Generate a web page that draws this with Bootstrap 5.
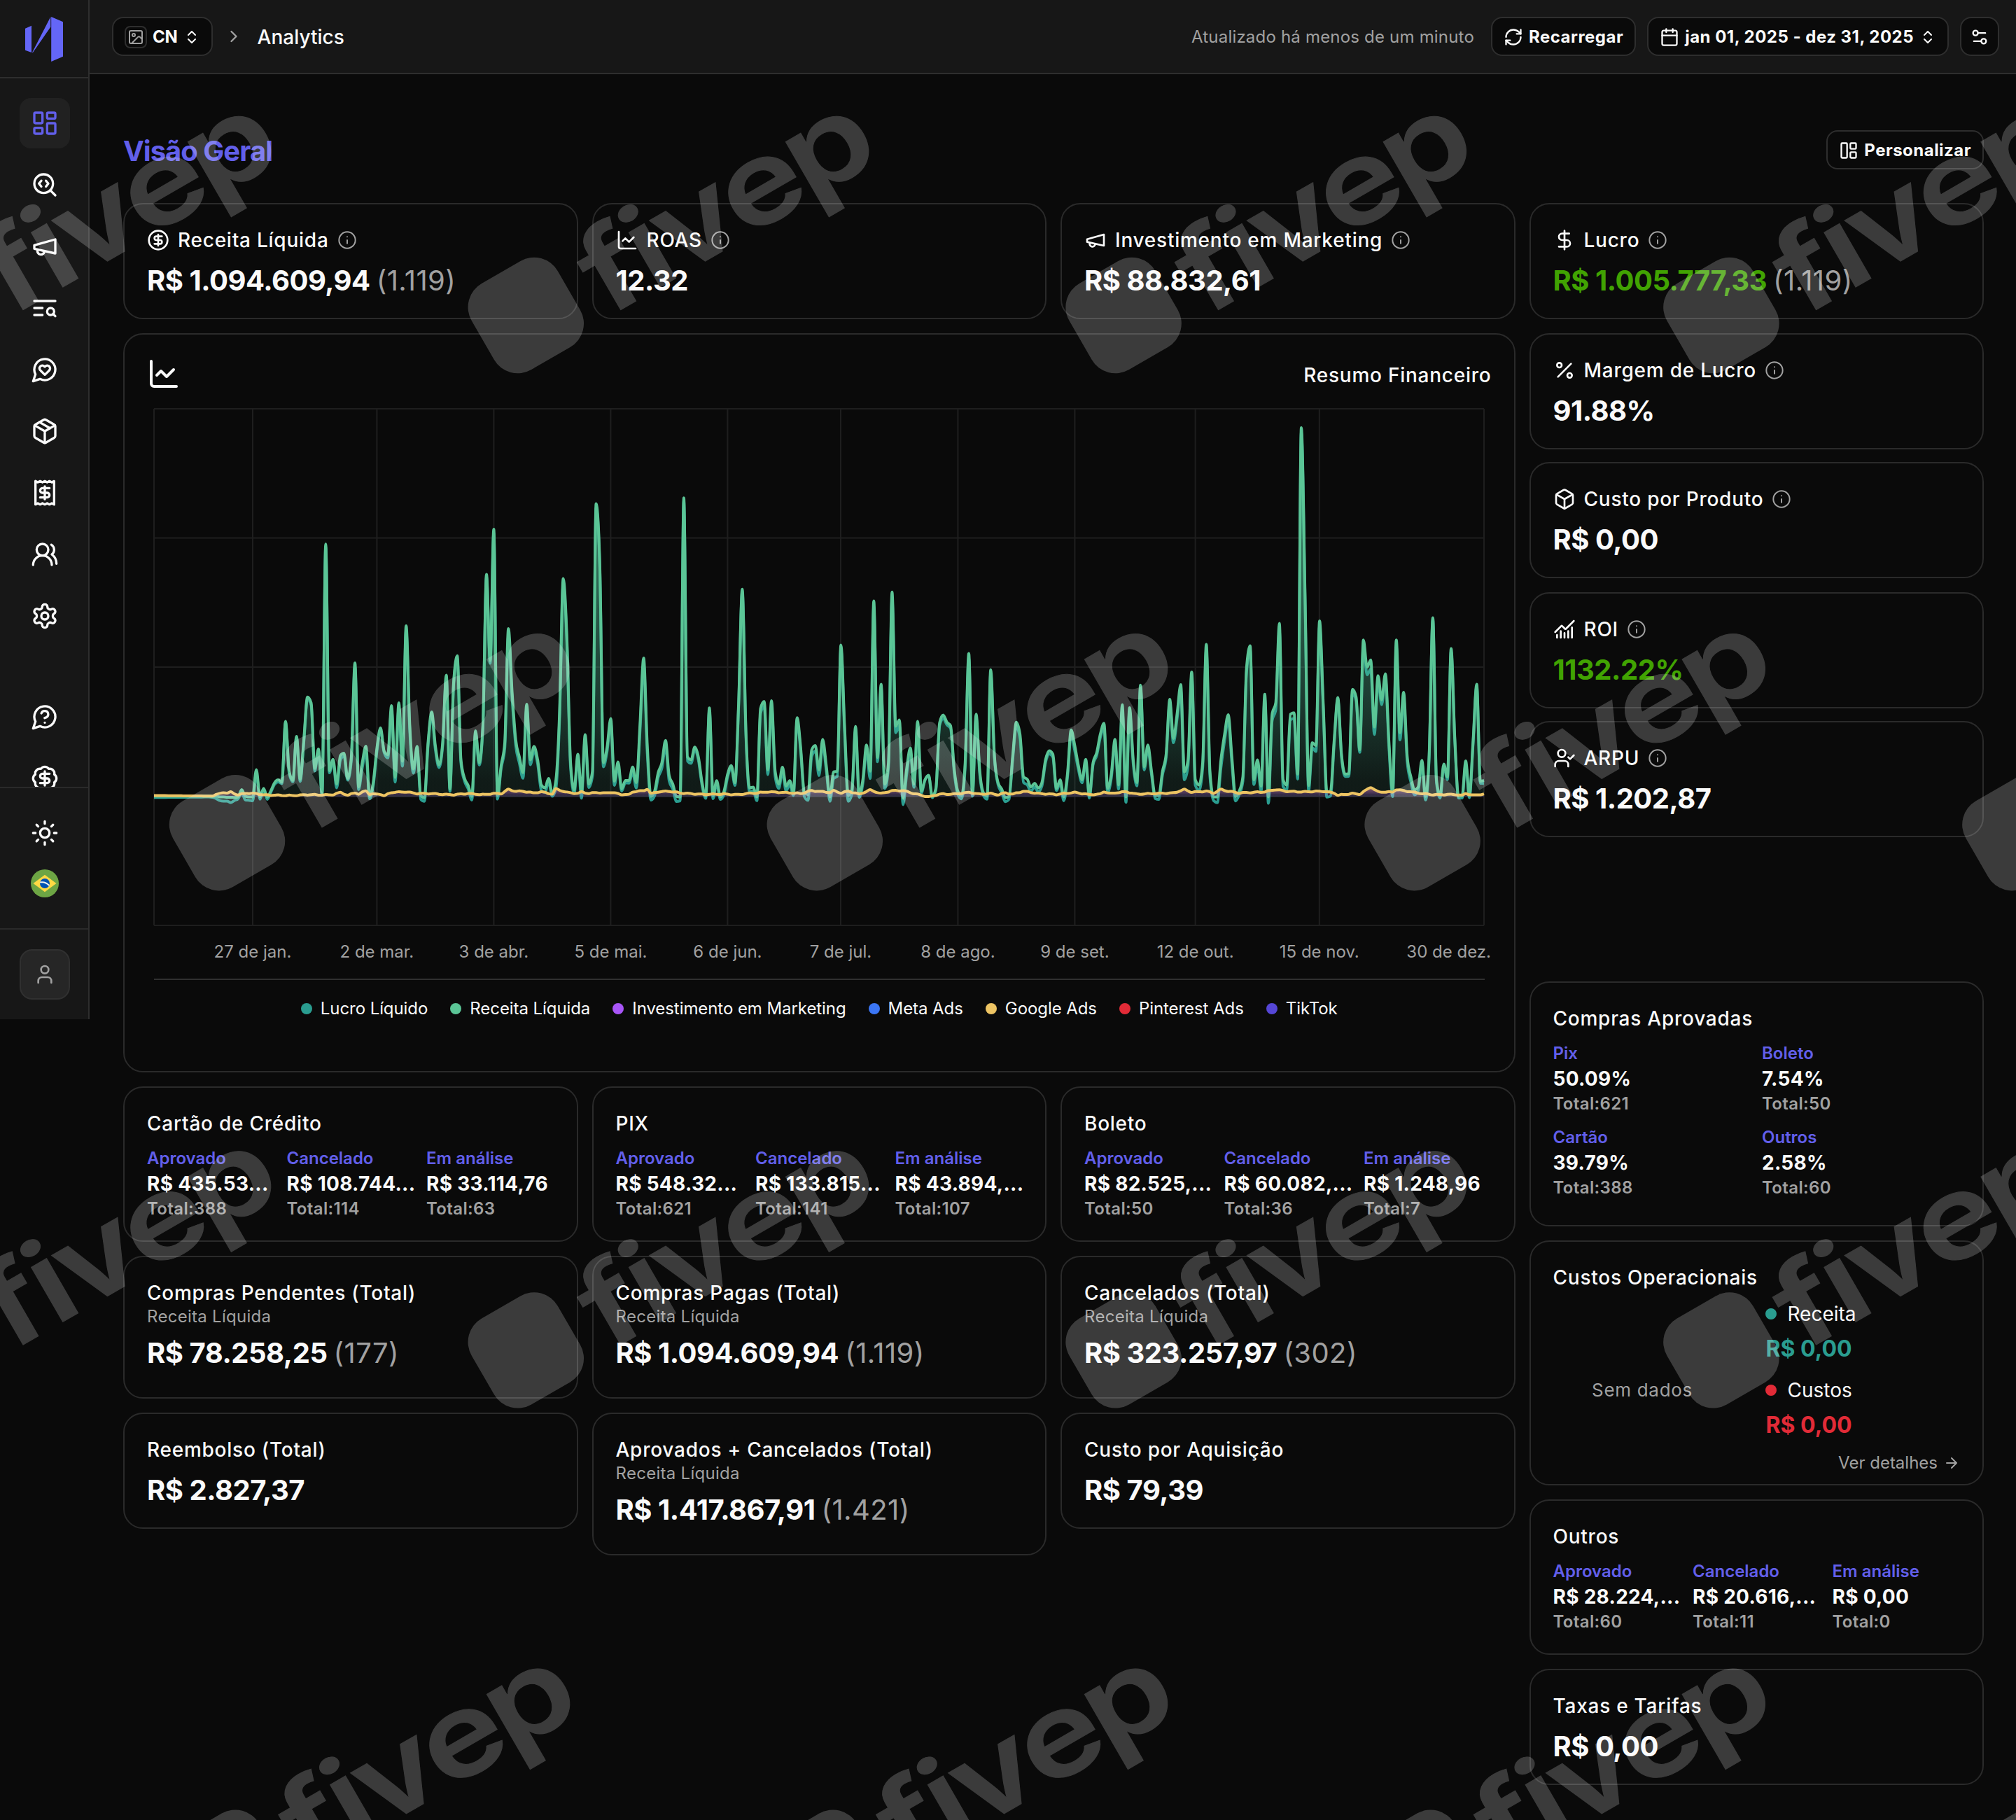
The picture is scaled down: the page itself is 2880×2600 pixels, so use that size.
<!-- index.html -->
<!DOCTYPE html>
<html lang="pt-BR" data-bs-theme="dark">
<head>
    <meta charset="UTF-8">
    <meta name="viewport" content="width=device-width, initial-scale=1.0">
    <title>Analytics</title>
    <link href="https://cdn.jsdelivr.net/npm/bootstrap@5.3.0/dist/css/bootstrap.min.css" rel="stylesheet">
    <style>
        body {
            background-color: #0a0a0a;
            color: #fafafa;
            font-family: Inter, "Liberation Sans", sans-serif;
            font-size: 28px;
            line-height: 40px;
            width: 2880px;
            height: 2600px;
            overflow: hidden;
        }
        .ico {
            fill: none;
            stroke: currentColor;
            stroke-width: 2;
            stroke-linecap: round;
            stroke-linejoin: round;
            width: 28px;
            height: 28px;
            flex: none;
        }
        .ico-24 { width: 24px; height: 24px; }
        .ico-32 { width: 32px; height: 32px; }
        .ico-40 { width: 40px; height: 40px; }
        .ico-48 { width: 48px; height: 48px; }
        .ico-info { stroke-width: 1.7; color: #a1a1a1; }
        .soft { color: #a1a1a1; }
        .brand { color: #625fea; }

        /* sidebar */
        .side {
            width: 128px;
            height: 1456px;
            background-color: #171717;
            border-right: 2px solid #2e2e2e;
            flex: none;
        }
        .side-logo { height: 112px; border-bottom: 2px solid #2e2e2e; }
        .side-nav { height: 1012px; padding: 28px 0 0 28px; gap: 16px; overflow: hidden; }
        .side-nav > .side-help { margin-top: 56px; }
        .side-tools { height: 202px; padding: 28px 0 0 28px; border-top: 2px solid #2a2a2a; }
        .side-user { padding: 28px 0 0 28px; border-top: 2px solid #2a2a2a; }
        .side-btn {
            width: 72px;
            height: 72px;
            border-radius: 16px;
            color: #fafafa;
            flex: none;
        }
        .side-btn.on { background-color: #212121; color: #625fea; }
        .side-btn.who { background-color: #262626; border: 2px solid #303030; color: #a1a1a1; border-radius: 18px; }

        /* top bar */
        .topbar {
            height: 106px;
            padding: 0 24px 0 32px;
            background-color: #171717;
            border-bottom: 2px solid #2e2e2e;
        }
        .crumb { font-weight: 500; margin-left: 4px; padding-top: 1px; }
        .updated { font-size: 24px; letter-spacing: .008em; padding-top: 1px; }
        .btn-dark-line {
            height: 56px;
            padding: 1px 16px 0;
            background-color: #0a0a0a;
            border: 2px solid #2e2e2e;
            border-radius: 16px;
            color: #fafafa;
            font-size: 24px;
            line-height: 36px;
            font-weight: 700;
            letter-spacing: .02em;
        }
        .btn-team { letter-spacing: -.01em; }
        .thumb {
            width: 32px;
            height: 32px;
            border: 2px solid #2e2e2e;
            border-radius: 8px;
            color: #a1a1a1;
        }

        /* page */
        .page { padding: 80px 46px 0 48px; }
        .page-head { height: 56px; margin-bottom: 48px; }
        .page-title { font-size: 40px; font-weight: 700; line-height: 56px; letter-spacing: -.025em; padding-top: 3px; }
        .g-tile { --bs-gutter-x: 20px; --bs-gutter-y: 20px; }
        .tile {
            height: 166px;
            padding: 31px 32px 0;
            background-color: #0a0a0a;
            border: 2px solid #2a2a2a;
            border-radius: 28px;
            color: #fafafa;
        }
        .tile-sub { height: 204px; }
        .tile-split { height: 222px; }
        .tile-tall { height: 350px; }
        .tile-chart { height: 1056px; padding-top: 32px; }
        .tile-up { margin-top: -2px; }
        .tile-gap { margin-top: 186px; }
        .tile-name { font-size: 28px; line-height: 40px; font-weight: 500; letter-spacing: .027em; gap: 12px; }
        .tile-note { font-size: 24px; line-height: 28px; letter-spacing: .012em; color: #a1a1a1; }
        .tile-value { font-size: 40px; line-height: 56px; font-weight: 700; letter-spacing: -.012em; margin-top: 10px; }
        .tile-value span { font-weight: 400; letter-spacing: .01em; color: #a1a1a1; }
        .up { color: #41a302; }

        .parts { gap: 12px 16.5px; margin-top: 12px; }
        .part { width: 183px; flex: none; line-height: 36px; white-space: nowrap; }
        .parts-2 .part { width: 282px; }
        .part-key { font-size: 24px; font-weight: 600; color: #625fea; }
        .part-val { font-size: 28px; font-weight: 700; letter-spacing: .01em; }
        .part-sum { font-size: 24px; font-weight: 600; letter-spacing: .015em; color: #a1a1a1; }

        /* costs */
        .no-data { width: 299px; padding: 109px 44px 0 0; font-size: 26px; letter-spacing: .027em; }
        .cost-key { gap: 16px; line-height: 40px; padding-left: 4px; }
        .cost-val { font-size: 32px; font-weight: 700; line-height: 44px; margin: 8px 0 17px 5px; }
        .cost-more { font-size: 24px; line-height: 36px; gap: 8px; margin-top: -3px; }

        /* chart */
        .plot { display: block; width: 1920px; height: 840px; }
        .plot text { font-size: 24px; fill: #a1a1a1; text-anchor: middle; }
        .legend-row {
            margin: 0 10px;
            padding-top: 23px;
            border-top: 2px solid #303030;
            gap: 32px;
            font-size: 24px;
            line-height: 36px;
            letter-spacing: -.003em;
        }
        .dot { width: 16px; height: 16px; border-radius: 50%; flex: none; }

        /* tiled mark above everything */
        .stamp { position: absolute; inset: 0; width: 2880px; height: 2600px; pointer-events: none; fill: #fff; opacity: .2; }
        .stamp text { font-size: 165px; font-weight: 600; stroke: #fff; stroke-width: 1; }
    </style>
</head>
<body class="position-relative">

<!-- icon set -->
<svg class="d-none">
    <symbol id="i-image" viewBox="0 0 24 24"><rect x="3" y="3" width="18" height="18" rx="2"/><circle cx="9" cy="9" r="2"/><path d="m21 15-3.086-3.086a2 2 0 0 0-2.828 0L6 21"/></symbol>
    <symbol id="i-updown" viewBox="0 0 24 24"><path d="m7 15 5 5 5-5M7 9l5-5 5 5"/></symbol>
    <symbol id="i-right" viewBox="0 0 24 24"><path d="m9 18 6-6-6-6"/></symbol>
    <symbol id="i-refresh" viewBox="0 0 24 24"><path d="M3 12a9 9 0 0 1 9-9 9.75 9.75 0 0 1 6.74 2.74L21 8"/><path d="M21 3v5h-5"/><path d="M21 12a9 9 0 0 1-9 9 9.75 9.75 0 0 1-6.74-2.74L3 16"/><path d="M8 16H3v5"/></symbol>
    <symbol id="i-calendar" viewBox="0 0 24 24"><path d="M8 2v4M16 2v4M3 10h18"/><rect x="3" y="4" width="18" height="18" rx="2"/></symbol>
    <symbol id="i-sliders" viewBox="0 0 24 24"><path d="M14 17H5M19 7h-9"/><circle cx="17" cy="17" r="3"/><circle cx="7" cy="7" r="3"/></symbol>
    <symbol id="i-panel" viewBox="0 0 24 24"><rect x="3" y="3" width="7" height="18" rx="1"/><rect x="14" y="3" width="7" height="7" rx="1"/><rect x="14" y="14" width="7" height="7" rx="1"/></symbol>
    <symbol id="i-dash" viewBox="0 0 24 24"><rect x="3" y="3" width="7" height="9" rx="1"/><rect x="14" y="3" width="7" height="5" rx="1"/><rect x="14" y="12" width="7" height="9" rx="1"/><rect x="3" y="16" width="7" height="5" rx="1"/></symbol>
    <symbol id="i-search-code" viewBox="0 0 24 24"><path d="m13 13.5 2-2.5-2-2.5"/><path d="m21 21-4.3-4.3"/><path d="M9 8.5 7 11l2 2.5"/><circle cx="11" cy="11" r="8"/></symbol>
    <symbol id="i-megaphone" viewBox="0 0 24 24"><path d="m3 11 18-5v12L3 14v-3z"/><path d="M11.6 16.8a3 3 0 1 1-5.8-1.6"/></symbol>
    <symbol id="i-text-search" viewBox="0 0 24 24"><path d="M21 6H3M10 12H3M10 18H3"/><circle cx="17" cy="15" r="3"/><path d="m21 19-1.9-1.9"/></symbol>
    <symbol id="i-heart" viewBox="0 0 24 24"><path d="M7.9 20A9 9 0 1 0 4 16.1L2 22Z"/><path d="M15.8 9.2a2.5 2.5 0 0 0-3.5 0l-.3.4-.35-.3a2.42 2.42 0 1 0-3.2 3.6l3.6 3.5 3.6-3.5c1.2-1.2 1.1-2.7.2-3.7"/></symbol>
    <symbol id="i-package" viewBox="0 0 24 24"><path d="m7.5 4.27 9 5.15"/><path d="M21 8a2 2 0 0 0-1-1.73l-7-4a2 2 0 0 0-2 0l-7 4A2 2 0 0 0 3 8v8a2 2 0 0 0 1 1.73l7 4a2 2 0 0 0 2 0l7-4A2 2 0 0 0 21 16Z"/><path d="m3.3 7 8.7 5 8.7-5M12 22V12"/></symbol>
    <symbol id="i-box" viewBox="0 0 24 24"><path d="M21 8a2 2 0 0 0-1-1.73l-7-4a2 2 0 0 0-2 0l-7 4A2 2 0 0 0 3 8v8a2 2 0 0 0 1 1.73l7 4a2 2 0 0 0 2 0l7-4A2 2 0 0 0 21 16Z"/><path d="m3.3 7 8.7 5 8.7-5M12 22V12"/></symbol>
    <symbol id="i-receipt" viewBox="0 0 24 24"><path d="M4 2v20l2-1 2 1 2-1 2 1 2-1 2 1 2-1 2 1V2l-2 1-2-1-2 1-2-1-2 1-2-1-2 1Z"/><path d="M16 8h-6a2 2 0 1 0 0 4h4a2 2 0 1 1 0 4H8M12 17.5v-11"/></symbol>
    <symbol id="i-users" viewBox="0 0 24 24"><path d="M18 21a8 8 0 0 0-16 0"/><circle cx="10" cy="8" r="5"/><path d="M22 20c0-3.37-2-6.5-4-8a5 5 0 0 0-.45-8.3"/></symbol>
    <symbol id="i-gear" viewBox="0 0 24 24"><path d="M12.22 2h-.44a2 2 0 0 0-2 2v.18a2 2 0 0 1-1 1.73l-.43.25a2 2 0 0 1-2 0l-.15-.08a2 2 0 0 0-2.73.73l-.22.38a2 2 0 0 0 .73 2.73l.15.1a2 2 0 0 1 1 1.72v.51a2 2 0 0 1-1 1.74l-.15.09a2 2 0 0 0-.73 2.73l.22.38a2 2 0 0 0 2.73.73l.15-.08a2 2 0 0 1 2 0l.43.25a2 2 0 0 1 1 1.73V20a2 2 0 0 0 2 2h.44a2 2 0 0 0 2-2v-.18a2 2 0 0 1 1-1.73l.43-.25a2 2 0 0 1 2 0l.15.08a2 2 0 0 0 2.73-.73l.22-.39a2 2 0 0 0-.73-2.73l-.15-.08a2 2 0 0 1-1-1.74v-.5a2 2 0 0 1 1-1.74l.15-.09a2 2 0 0 0 .73-2.73l-.22-.38a2 2 0 0 0-2.73-.73l-.15.08a2 2 0 0 1-2 0l-.43-.25a2 2 0 0 1-1-1.73V4a2 2 0 0 0-2-2z"/><circle cx="12" cy="12" r="3"/></symbol>
    <symbol id="i-question" viewBox="0 0 24 24"><path d="M7.9 20A9 9 0 1 0 4 16.1L2 22Z"/><path d="M9.09 9a3 3 0 0 1 5.83 1c0 2-3 3-3 3M12 17h.01"/></symbol>
    <symbol id="i-badge" viewBox="0 0 24 24"><path d="M3.85 8.62a4 4 0 0 1 4.78-4.77 4 4 0 0 1 6.74 0 4 4 0 0 1 4.78 4.78 4 4 0 0 1 0 6.74 4 4 0 0 1-4.77 4.78 4 4 0 0 1-6.75 0 4 4 0 0 1-4.78-4.77 4 4 0 0 1 0-6.76Z"/><path d="M16 8h-6a2 2 0 1 0 0 4h4a2 2 0 1 1 0 4H8M12 18V6"/></symbol>
    <symbol id="i-sun" viewBox="0 0 24 24"><circle cx="12" cy="12" r="4"/><path d="M12 2v2M12 20v2M4.93 4.93l1.41 1.41M17.66 17.66l1.41 1.41M2 12h2M20 12h2M6.34 17.66l-1.41 1.41M19.07 4.93l-1.41 1.41"/></symbol>
    <symbol id="i-user" viewBox="0 0 24 24"><path d="M19 21v-2a4 4 0 0 0-4-4H9a4 4 0 0 0-4 4v2"/><circle cx="12" cy="7" r="4"/></symbol>
    <symbol id="i-coin" viewBox="0 0 24 24"><circle cx="12" cy="12" r="10"/><path d="M16 8h-6a2 2 0 1 0 0 4h4a2 2 0 1 1 0 4H8M12 18V6"/></symbol>
    <symbol id="i-line" viewBox="0 0 24 24"><path d="M3 3v16a2 2 0 0 0 2 2h16"/><path d="m19 9-5 5-4-4-3 3"/></symbol>
    <symbol id="i-dollar" viewBox="0 0 24 24"><path d="M12 2v20M17 5H9.5a3.5 3.5 0 0 0 0 7h5a3.5 3.5 0 0 1 0 7H6"/></symbol>
    <symbol id="i-percent" viewBox="0 0 24 24"><path d="M19 5 5 19"/><circle cx="6.5" cy="6.5" r="2.5"/><circle cx="17.5" cy="17.5" r="2.5"/></symbol>
    <symbol id="i-combined" viewBox="0 0 24 24"><path d="M12 16v5M16 14v7M20 10v11M4 18v3M8 14v7"/><path d="m22 3-8.646 8.646a.5.5 0 0 1-.708 0L9.354 8.354a.5.5 0 0 0-.707 0L2 15"/></symbol>
    <symbol id="i-user-check" viewBox="0 0 24 24"><path d="m16 11 2 2 4-4"/><path d="M16 21v-2a4 4 0 0 0-4-4H6a4 4 0 0 0-4 4v2"/><circle cx="9" cy="7" r="4"/></symbol>
    <symbol id="i-info" viewBox="0 0 24 24"><circle cx="12" cy="12" r="10"/><path d="M12 16v-4M12 8h.01"/></symbol>
    <symbol id="i-arrow" viewBox="0 0 24 24"><path d="M5 12h14M12 5l7 7-7 7"/></symbol>
</svg>

<div class="d-flex align-items-start">
    <aside class="side d-flex flex-column">
        <div class="side-logo flex-shrink-0">
            <svg class="d-block" width="126" height="110" fill="#6466f7">
                <path d="M36 40.7 45 36.7V75L36 71.7Z"/>
                <path d="M46 75 72.3 24V38.5L47 75Z"/>
                <path d="M73.2 24 90 31.3V80.7L73.2 88Z"/>
            </svg>
        </div>
        <nav class="side-nav d-flex flex-column flex-shrink-0">
            <a class="side-btn on d-flex align-items-center justify-content-center"><svg class="ico ico-40"><use href="#i-dash"/></svg></a>
            <a class="side-btn d-flex align-items-center justify-content-center"><svg class="ico ico-40"><use href="#i-search-code"/></svg></a>
            <a class="side-btn d-flex align-items-center justify-content-center"><svg class="ico ico-40"><use href="#i-megaphone"/></svg></a>
            <a class="side-btn d-flex align-items-center justify-content-center"><svg class="ico ico-40"><use href="#i-text-search"/></svg></a>
            <a class="side-btn d-flex align-items-center justify-content-center"><svg class="ico ico-40"><use href="#i-heart"/></svg></a>
            <a class="side-btn d-flex align-items-center justify-content-center"><svg class="ico ico-40"><use href="#i-package"/></svg></a>
            <a class="side-btn d-flex align-items-center justify-content-center"><svg class="ico ico-40"><use href="#i-receipt"/></svg></a>
            <a class="side-btn d-flex align-items-center justify-content-center"><svg class="ico ico-40"><use href="#i-users"/></svg></a>
            <a class="side-btn d-flex align-items-center justify-content-center"><svg class="ico ico-40"><use href="#i-gear"/></svg></a>
            <a class="side-btn side-help d-flex align-items-center justify-content-center"><svg class="ico ico-40"><use href="#i-question"/></svg></a>
            <a class="side-btn d-flex align-items-center justify-content-center"><svg class="ico ico-40"><use href="#i-badge"/></svg></a>
        </nav>
        <div class="side-tools flex-shrink-0">
            <a class="side-btn d-flex align-items-center justify-content-center"><svg class="ico ico-40"><use href="#i-sun"/></svg></a>
            <a class="side-btn d-flex align-items-center justify-content-center">
                <svg width="40" height="40" viewBox="0 0 40 40">
                    <circle cx="20" cy="20" r="20" fill="#6da544"/>
                    <path d="M20 7.8 36.5 20 20 32.2 3.5 20Z" fill="#ffda44"/>
                    <circle cx="20" cy="20" r="7" fill="#0052b4"/>
                    <path d="M13.1 18.4Q21 17 26.3 23" fill="none" stroke="#f0f0f0" stroke-width="2"/>
                </svg>
            </a>
        </div>
        <div class="side-user">
            <a class="side-btn who d-flex align-items-center justify-content-center"><svg class="ico ico-32"><use href="#i-user"/></svg></a>
        </div>
    </aside>

    <div class="flex-grow-1">
        <header class="topbar d-flex align-items-center">
            <button class="btn btn-dark-line btn-team d-flex align-items-center gap-2">
                <span class="thumb d-flex align-items-center justify-content-center"><svg class="ico ico-24"><use href="#i-image"/></svg></span>
                <span>CN</span>
                <svg class="ico ico-24"><use href="#i-updown"/></svg>
            </button>
            <svg class="ico soft mx-3"><use href="#i-right"/></svg>
            <span class="crumb">Analytics</span>
            <div class="d-flex align-items-center gap-3 ms-auto">
                <span class="soft updated me-2">Atualizado há menos de um minuto</span>
                <button class="btn btn-dark-line d-flex align-items-center gap-2"><svg class="ico"><use href="#i-refresh"/></svg><span>Recarregar</span></button>
                <button class="btn btn-dark-line d-flex align-items-center gap-2"><svg class="ico"><use href="#i-calendar"/></svg><span>jan 01, 2025 - dez 31, 2025</span><svg class="ico ico-24"><use href="#i-updown"/></svg></button>
                <button class="btn btn-dark-line d-flex align-items-center justify-content-center px-1" aria-label="Filtros"><svg class="ico mx-2"><use href="#i-sliders"/></svg></button>
            </div>
        </header>

        <main class="page">
            <div class="page-head d-flex align-items-center justify-content-between">
                <h1 class="page-title brand m-0">Visão Geral</h1>
                <button class="btn btn-dark-line d-flex align-items-center gap-2"><svg class="ico"><use href="#i-panel"/></svg><span>Personalizar</span></button>
            </div>

            <div class="row g-tile">
                <div class="col-9">
                    <div class="row g-tile">
                        <div class="col-4">
                            <div class="card tile">
                                <div class="tile-name d-flex align-items-center"><svg class="ico ico-32"><use href="#i-coin"/></svg>Receita Líquida<svg class="ico ico-info"><use href="#i-info"/></svg></div>
                                <div class="tile-value">R$ 1.094.609,94 <span>(1.119)</span></div>
                            </div>
                        </div>
                        <div class="col-4">
                            <div class="card tile">
                                <div class="tile-name d-flex align-items-center"><svg class="ico ico-32"><use href="#i-line"/></svg>ROAS<svg class="ico ico-info"><use href="#i-info"/></svg></div>
                                <div class="tile-value">12.32</div>
                            </div>
                        </div>
                        <div class="col-4">
                            <div class="card tile">
                                <div class="tile-name d-flex align-items-center"><svg class="ico ico-32"><use href="#i-megaphone"/></svg>Investimento em Marketing<svg class="ico ico-info"><use href="#i-info"/></svg></div>
                                <div class="tile-value">R$ 88.832,61</div>
                            </div>
                        </div>

                        <div class="col-12">
                            <div class="card tile tile-chart">
                                <div class="d-flex align-items-center justify-content-between">
                                    <svg class="ico ico-48"><use href="#i-line"/></svg>
                                    <div class="tile-name pt-1">Resumo Financeiro</div>
                                </div>
                                <svg class="plot" id="plot" viewBox="0 0 1920 840">
                                    <defs>
                                        <linearGradient id="fillNet" x1="0" y1="0" x2="0" y2="1"><stop offset=".05" stop-color="#2a9d90" stop-opacity=".32"/><stop offset=".95" stop-color="#2a9d90" stop-opacity=".04"/></linearGradient>
                                        <linearGradient id="fillGross" x1="0" y1="0" x2="0" y2="1"><stop offset=".05" stop-color="#5bc596" stop-opacity=".6"/><stop offset=".95" stop-color="#5bc596" stop-opacity=".06"/></linearGradient>
                                        <linearGradient id="fillAds" x1="0" y1="0" x2="0" y2="1"><stop offset=".05" stop-color="#e08a9c" stop-opacity=".6"/><stop offset=".95" stop-color="#a855f7" stop-opacity=".12"/></linearGradient>
                                    </defs>
                                </svg>
                                <div class="legend-row d-flex justify-content-center" id="legend"></div>
                            </div>
                        </div>

                        <div class="col-4">
                            <div class="card tile tile-split">
                                <div class="tile-name">Cartão de Crédito</div>
                                <div class="parts d-flex">
                                    <div class="part"><div class="part-key">Aprovado</div><div class="part-val">R$ 435.53...</div><div class="part-sum">Total:388</div></div>
                                    <div class="part"><div class="part-key">Cancelado</div><div class="part-val">R$ 108.744...</div><div class="part-sum">Total:114</div></div>
                                    <div class="part"><div class="part-key">Em análise</div><div class="part-val">R$ 33.114,76</div><div class="part-sum">Total:63</div></div>
                                </div>
                            </div>
                        </div>
                        <div class="col-4">
                            <div class="card tile tile-split">
                                <div class="tile-name">PIX</div>
                                <div class="parts d-flex">
                                    <div class="part"><div class="part-key">Aprovado</div><div class="part-val">R$ 548.32...</div><div class="part-sum">Total:621</div></div>
                                    <div class="part"><div class="part-key">Cancelado</div><div class="part-val">R$ 133.815...</div><div class="part-sum">Total:141</div></div>
                                    <div class="part"><div class="part-key">Em análise</div><div class="part-val">R$ 43.894,...</div><div class="part-sum">Total:107</div></div>
                                </div>
                            </div>
                        </div>
                        <div class="col-4">
                            <div class="card tile tile-split">
                                <div class="tile-name">Boleto</div>
                                <div class="parts d-flex">
                                    <div class="part"><div class="part-key">Aprovado</div><div class="part-val">R$ 82.525,...</div><div class="part-sum">Total:50</div></div>
                                    <div class="part"><div class="part-key">Cancelado</div><div class="part-val">R$ 60.082,...</div><div class="part-sum">Total:36</div></div>
                                    <div class="part"><div class="part-key">Em análise</div><div class="part-val">R$ 1.248,96</div><div class="part-sum">Total:7</div></div>
                                </div>
                            </div>
                        </div>

                        <div class="col-4">
                            <div class="card tile tile-sub">
                                <div class="tile-name">Compras Pendentes (Total)</div>
                                <div class="tile-note">Receita Líquida</div>
                                <div class="tile-value">R$ 78.258,25 <span>(177)</span></div>
                            </div>
                        </div>
                        <div class="col-4">
                            <div class="card tile tile-sub">
                                <div class="tile-name">Compras Pagas (Total)</div>
                                <div class="tile-note">Receita Líquida</div>
                                <div class="tile-value">R$ 1.094.609,94 <span>(1.119)</span></div>
                            </div>
                        </div>
                        <div class="col-4">
                            <div class="card tile tile-sub">
                                <div class="tile-name">Cancelados (Total)</div>
                                <div class="tile-note">Receita Líquida</div>
                                <div class="tile-value">R$ 323.257,97 <span>(302)</span></div>
                            </div>
                        </div>

                        <div class="col-4">
                            <div class="card tile">
                                <div class="tile-name">Reembolso (Total)</div>
                                <div class="tile-value">R$ 2.827,37</div>
                            </div>
                        </div>
                        <div class="col-4">
                            <div class="card tile tile-sub">
                                <div class="tile-name">Aprovados + Cancelados (Total)</div>
                                <div class="tile-note">Receita Líquida</div>
                                <div class="tile-value">R$ 1.417.867,91 <span>(1.421)</span></div>
                            </div>
                        </div>
                        <div class="col-4">
                            <div class="card tile">
                                <div class="tile-name">Custo por Aquisição</div>
                                <div class="tile-value">R$ 79,39</div>
                            </div>
                        </div>
                    </div>
                </div>

                <div class="col-3 d-flex flex-column" style="gap: 20px">
                    <div class="card tile">
                        <div class="tile-name d-flex align-items-center"><svg class="ico ico-32"><use href="#i-dollar"/></svg>Lucro<svg class="ico ico-info"><use href="#i-info"/></svg></div>
                        <div class="tile-value up">R$ 1.005.777,33 <span>(1.119)</span></div>
                    </div>
                    <div class="card tile">
                        <div class="tile-name d-flex align-items-center"><svg class="ico ico-32"><use href="#i-percent"/></svg>Margem de Lucro<svg class="ico ico-info"><use href="#i-info"/></svg></div>
                        <div class="tile-value">91.88%</div>
                    </div>
                    <div class="card tile tile-up">
                        <div class="tile-name d-flex align-items-center"><svg class="ico ico-32"><use href="#i-box"/></svg>Custo por Produto<svg class="ico ico-info"><use href="#i-info"/></svg></div>
                        <div class="tile-value">R$ 0,00</div>
                    </div>
                    <div class="card tile">
                        <div class="tile-name d-flex align-items-center"><svg class="ico ico-32"><use href="#i-combined"/></svg>ROI<svg class="ico ico-info"><use href="#i-info"/></svg></div>
                        <div class="tile-value up">1132.22%</div>
                    </div>
                    <div class="card tile tile-up">
                        <div class="tile-name d-flex align-items-center"><svg class="ico ico-32"><use href="#i-user-check"/></svg>ARPU<svg class="ico ico-info"><use href="#i-info"/></svg></div>
                        <div class="tile-value">R$ 1.202,87</div>
                    </div>

                    <div class="card tile tile-tall tile-gap">
                        <div class="tile-name">Compras Aprovadas</div>
                        <div class="parts parts-2 d-flex flex-wrap">
                            <div class="part"><div class="part-key">Pix</div><div class="part-val">50.09%</div><div class="part-sum">Total:621</div></div>
                            <div class="part"><div class="part-key">Boleto</div><div class="part-val">7.54%</div><div class="part-sum">Total:50</div></div>
                            <div class="part"><div class="part-key">Cartão</div><div class="part-val">39.79%</div><div class="part-sum">Total:388</div></div>
                            <div class="part"><div class="part-key">Outros</div><div class="part-val">2.58%</div><div class="part-sum">Total:60</div></div>
                        </div>
                    </div>
                    <div class="card tile tile-tall">
                        <div class="tile-name">Custos Operacionais</div>
                        <div class="d-flex pt-2 mt-1">
                            <div class="no-data soft text-center">Sem dados</div>
                            <div>
                                <div class="cost-key d-flex align-items-center"><span class="dot" style="background: #2a9d90"></span>Receita</div>
                                <div class="cost-val" style="color: #2a9d90">R$ 0,00</div>
                                <div class="cost-key d-flex align-items-center"><span class="dot" style="background: #e22b37"></span>Custos</div>
                                <div class="cost-val" style="color: #e22b37">R$ 0,00</div>
                            </div>
                        </div>
                        <div class="cost-more soft d-flex align-items-center justify-content-end">Ver detalhes<svg class="ico ico-24"><use href="#i-arrow"/></svg></div>
                    </div>
                    <div class="card tile tile-split">
                        <div class="tile-name">Outros</div>
                        <div class="parts d-flex">
                            <div class="part"><div class="part-key">Aprovado</div><div class="part-val">R$ 28.224,...</div><div class="part-sum">Total:60</div></div>
                            <div class="part"><div class="part-key">Cancelado</div><div class="part-val">R$ 20.616,...</div><div class="part-sum">Total:11</div></div>
                            <div class="part"><div class="part-key">Em análise</div><div class="part-val">R$ 0,00</div><div class="part-sum">Total:0</div></div>
                        </div>
                    </div>
                    <div class="card tile">
                        <div class="tile-name">Taxas e Tarifas</div>
                        <div class="tile-value">R$ 0,00</div>
                    </div>
                </div>
            </div>
        </main>
    </div>
</div>

<svg class="stamp" id="stamp" viewBox="0 0 2880 2600">
    <defs>
        <g id="fivep" transform="rotate(-30)">
            <rect x="-71" y="-71" width="142" height="142" rx="39"/>
            <text transform="scale(1.2 1)" x="83 144.5 180.5 270 360" y="61">fivep</text>
        </g>
    </defs>
</svg>

<script src="https://cdn.jsdelivr.net/npm/bootstrap@5.3.0/dist/js/bootstrap.bundle.min.js"></script>
<script>
    // daily revenue, one value per day of the year
    const gross = [
        3, 3, 3, 3, 3, 3, 3, 3, 3, 3, 3, 3, 3, 3, 3, 3, 2, 3, 0, 0, -1, -1, -2, 0, 26, 2, 0, 0, 96, 0, 30, -1,
        22, 50, 60, 52, 265, 90, 58, 212, 62, 200, 350, 330, 100, 168, 12, 886, 92, 132, 45, 145, 153, 65, 140, 470, 35, 120, 178, 2,
        50, 170, 242, 160, 148, 320, 68, 330, 125, 600, 250, 98, 177, 5, -2, 190, 298, 180, 112, 190, 427, 28, 400, 495, 130, 65, 40, 2, 232, 120,
        250, 780, 478, 938, 5, 110, 190, 590, 370, 200, 140, 85, 325, 130, 177, 130, 42, 32, 65, 12, 60, 300, 765, 560, 120, 25, 150, 15, 218, 45,
        90, 1028, 820, 120, 175, 275, 55, 123, 28, 58, 58, 105, 50, 250, 487, 180, 2, 20, 85, 120, 198, 75, 45, 2, 0, 1048, 140, 130, 175, 140,
        50, 3, 312, 5, 57, 0, 20, 80, 110, 50, 330, 728, 230, 32, 34, 0, 310, 335, 95, 337, 90, 45, 104, 38, 57, 18, 278, 170, 15, 8,
        165, 180, 95, 202, 110, 0, 88, 90, 532, 250, 5, 25, 247, 10, 60, 182, 90, 687, 138, 395, 45, 120, 718, 248, 270, -5, 100, 172, 45, 265,
        20, 60, 76, 2, 30, 260, 287, 262, 250, 100, 20, 5, 120, 503, 15, 290, 90, 15, 3, 446, 150, 50, 28, -2, 2, 140, 262, 220, 70, 62,
        35, 48, 32, 50, 130, 162, 150, 30, 60, 0, 80, 235, 180, 110, 60, 132, 5, 120, 155, 220, 258, 30, 80, 202, 42, 323, 0, 313, 130, 50,
        392, 105, 182, 90, 5, 5, 90, 150, 342, 205, 290, 394, 88, 130, 438, 60, 42, 120, 535, 90, 0, 0, 130, 220, 288, 140, 2, 20, 70, 450,
        530, 60, 130, 38, 360, 0, 290, 330, 608, 60, 42, 290, 295, 80, 1294, 730, 40, 190, 180, 617, 330, 18, 20, 200, 348, 150, 80, 82, 377, 350,
        165, 550, 455, 480, 245, 425, 340, 432, 190, 18, 550, 225, 367, 140, 70, 25, 35, 128, 2, 150, 628, 60, 5, 115, 70, 520, 210, 3, 3, 126,
        5, 190, 395, 55, 58
    ];

    // ad spend as [day, value]; days in between are interpolated
    const spendKeys = [
        [0, 5], [16, 3], [18, 12], [19, 16], [20, 13], [21, 17], [23, 7], [25, 13], [28, 12], [30, 7], [38, 5], [42, 8], [46, 7], [49, 8], [51, 16], [53, 6],
        [55, 15], [56, 10], [58, 22], [59, 10], [62, 10], [63, 4], [65, 16], [69, 18], [72, 12], [76, 12], [79, 9], [82, 8], [86, 12], [90, 8], [93, 12], [95, 12],
        [97, 26], [99, 20], [101, 20], [104, 14], [106, 18], [109, 10], [110, 28], [112, 20], [113, 16], [116, 12], [117, 18], [119, 12], [121, 16], [123, 13], [125, 16],
        [128, 9], [130, 8], [131, 18], [134, 22], [135, 28], [136, 12], [138, 18], [141, 20], [144, 14], [150, 9], [156, 10], [160, 8], [162, 12], [165, 14], [168, 18], [172, 16],
        [177, 12], [180, 22], [185, 16], [186, 22], [188, 14], [190, 20], [193, 10], [196, 24], [199, 12], [202, 22], [205, 22], [208, 12], [212, 0], [215, 10], [219, 10],
        [223, 16], [226, 10], [229, 12], [231, 8], [233, 14], [235, 10], [238, 20], [242, 12], [247, 9], [252, 16], [256, 8], [259, 10], [260, 18], [262, 12],
        [264, 16], [266, 18], [269, 10], [274, 12], [279, 14], [282, 26], [284, 17], [288, 20], [290, 14], [292, 26], [294, 20], [297, 14], [304, 18], [307, 26],
        [310, 20], [314, 18], [320, 20], [323, 14], [324, 6], [328, 12], [330, 10], [333, 34], [335, 18], [339, 17], [340, 26], [344, 18], [347, 12], [350, 8],
        [356, 9], [358, 5], [359, 12], [361, 6], [364, 10]
    ];
    const spend = gross.map((_, day) => {
        const next = Math.max(1, spendKeys.findIndex(k => k[0] >= day));
        const [d0, v0] = spendKeys[next - 1], [d1, v1] = spendKeys[next];
        const ripple = day > 16 ? 1.6 * Math.sin(day * 1.9) : 0;
        return v0 + (v1 - v0) * (day - d0) / (d1 - d0) + ripple;
    });
    const net = gross.map((v, day) => v - spend[day]);

    const left = 10, right = 1910, ceiling = 26, floor = 764, zero = 580.5;
    const px = day => left + day * (right - left) / 364;
    const py = v => zero - v / 2.453;

    // monotone cubic through all days
    function curve(values) {
        const n = values.length, h = px(1) - px(0);
        const y = values.map(py);
        const s = y.slice(1).map((v, i) => (v - y[i]) / h);
        const m = y.map((_, i) => {
            if (i === 0) return s[0];
            if (i === n - 1) return s[n - 2];
            return (Math.sign(s[i - 1]) + Math.sign(s[i])) * Math.min(Math.abs(s[i - 1]), Math.abs(s[i]), Math.abs(s[i - 1] + s[i]) / 4);
        });
        let d = `M${px(0)},${y[0].toFixed(1)}`;
        for (let i = 1; i < n; i++) {
            d += `C${(px(i - 1) + h / 3).toFixed(1)},${(y[i - 1] + m[i - 1] * h / 3).toFixed(1)} ${(px(i) - h / 3).toFixed(1)},${(y[i] - m[i] * h / 3).toFixed(1)} ${px(i).toFixed(1)},${y[i].toFixed(1)}`;
        }
        return d;
    }
    const close = `L${right},${zero}L${left},${zero}Z`;

    const ticks = [
        [151, "27 de jan."], [328.4, "2 de mar."], [495.4, "3 de abr."], [662.4, "5 de mai."], [829.4, "6 de jun."], [991, "7 de jul."],
        [1158.4, "8 de ago."], [1325.4, "9 de set."], [1497.6, "12 de out."], [1674.8, "15 de nov."]
    ];

    let out = `<g stroke="#1e1e1e" stroke-width="2">`;
    for (let i = 0; i < 5; i++) {
        const y = ceiling + i * (floor - ceiling) / 4;
        out += `<path d="M${left} ${y}H${right}"/>`;
    }
    [left, ...ticks.map(t => t[0]), right].forEach(x => out += `<path d="M${x} ${ceiling}V${floor}"/>`);
    out += `</g>`;
    [[net, "#2a9d90", "fillNet"], [gross, "#5bc596", "fillGross"], [spend, "#edc463", "fillAds"]].forEach(([values, color, fill]) => {
        const d = curve(values);
        out += `<path d="${d}${close}" fill="url(#${fill})"/><path d="${d}" fill="none" stroke="${color}" stroke-width="4"/>`;
    });
    ticks.forEach(([x, label]) => out += `<text x="${x}" y="810">${label}</text>`);
    out += `<text x="1920" y="810" style="text-anchor: end">30 de dez.</text>`;
    document.getElementById("plot").insertAdjacentHTML("beforeend", out);

    document.getElementById("legend").innerHTML = [
        ["#2a9d90", "Lucro Líquido"], ["#5bc596", "Receita Líquida"], ["#a855f7", "Investimento em Marketing"], ["#3b76f6", "Meta Ads"],
        ["#edc463", "Google Ads"], ["#e22b37", "Pinterest Ads"], ["#5546d6", "TikTok"]
    ].map(([color, name]) => `<div class="d-flex align-items-center" style="gap: 12px"><span class="dot" style="background: ${color}"></span>${name}</div>`).join("");

    // rows are staggered by half a step
    let marks = "";
    for (let r = 0; r < 4; r++) {
        for (let c = 0; c < 4; c++) {
            marks += `<use href="#fivep" transform="translate(${-102.5 + (r % 2) * 427 + c * 853.8} ${450.5 + r * 739.2})"/>`;
        }
    }
    document.getElementById("stamp").insertAdjacentHTML("beforeend", marks);
</script>
</body>
</html>
